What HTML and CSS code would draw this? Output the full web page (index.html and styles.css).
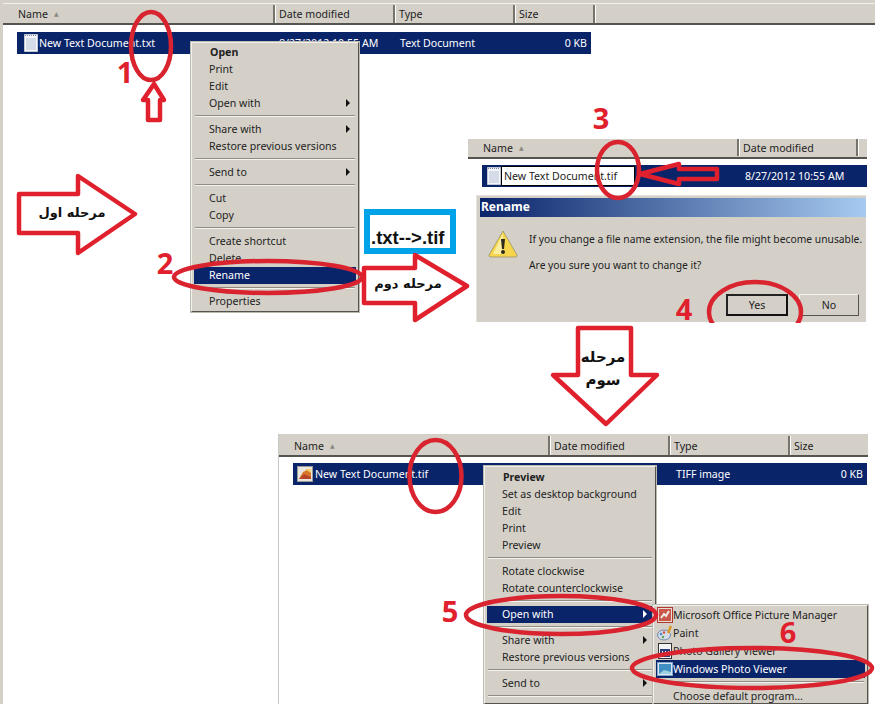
FILE: index.html
```html
<!DOCTYPE html>
<html lang="en">
<head>
    <meta charset="UTF-8">
    <meta name="viewport" content="width=device-width, initial-scale=1.0">
    <title>Rename txt to tif</title>
    <link rel="stylesheet" href="styles.css">
</head>
<body>
<div class="canvas">
    <svg class="icon-defs" width="0" height="0">
        <defs>
            <symbol id="doc" viewBox="0 0 14 18">
                <path d="M.5.5h13v17H.5z" fill="#f4f6fb" stroke="#c2c8d4"/>
                <path d="M1 1.500h12" stroke="#7d8696" stroke-dasharray="1 1"/>
                <path d="M2 5h10M2 7h10M2 9h10M2 11h10M2 13h10M2 15h10" stroke="#b6c2d6"/>
            </symbol>
        </defs>
    </svg>

    <!-- First explorer shot -->
    <section class="explorer shot-one">
        <div class="list-header">
            <div class="col col-name">Name <span class="sort">&#9650;</span></div>
            <div class="col col-date">Date modified</div>
            <div class="col col-type">Type</div>
            <div class="col col-size">Size</div>
            <div class="col col-rest"></div>
        </div>
        <div class="file-row">
            <svg class="file-icon" width="14" height="18"><use href="#doc"/></svg>
            <span class="file-name">New Text Document.txt</span>
            <span class="file-date">8/27/2012 10:55 AM</span>
            <span class="file-type">Text Document</span>
            <span class="file-size">0 KB</span>
        </div>
    </section>

    <div class="menu menu-one">
        <div class="menu-item bold">Open</div>
        <div class="menu-item">Print</div>
        <div class="menu-item">Edit</div>
        <div class="menu-item has-sub">Open with</div>
        <div class="menu-sep"></div>
        <div class="menu-item has-sub">Share with</div>
        <div class="menu-item">Restore previous versions</div>
        <div class="menu-sep"></div>
        <div class="menu-item has-sub">Send to</div>
        <div class="menu-sep"></div>
        <div class="menu-item">Cut</div>
        <div class="menu-item">Copy</div>
        <div class="menu-sep"></div>
        <div class="menu-item">Create shortcut</div>
        <div class="menu-item">Delete</div>
        <div class="menu-item active">Rename</div>
        <div class="menu-sep"></div>
        <div class="menu-item">Properties</div>
    </div>

    <!-- Rename shot -->
    <section class="explorer shot-two">
        <div class="list-header">
            <div class="col col-name">Name <span class="sort">&#9650;</span></div>
            <div class="col col-date">Date modified</div>
            <div class="col col-cut"></div>
        </div>
        <div class="file-row">
            <svg class="file-icon" width="14" height="18"><use href="#doc"/></svg>
            <span class="rename-input">New Text Document.tif</span>
            <span class="file-date">8/27/2012 10:55 AM</span>
        </div>
    </section>

    <div class="dialog">
        <div class="dialog-title">Rename</div>
        <div class="dialog-body">
            <svg class="warn" width="32" height="30" viewBox="0 0 32 30">
                <path d="M16 2 L30 26 Q30.500 28 28 28 H4 Q1.500 28 2 26 Z" fill="#f6d54a" stroke="#a8a070"/>
                <path d="M16 4 L6 25 H16 Z" fill="#fbeea0"/>
                <path d="M14 10h4l-1 10h-2z" fill="#2b2a1c"/>
                <circle cx="16" cy="23" r="2" fill="#2b2a1c"/>
            </svg>
            <div class="dialog-text">
                <p>If you change a file name extension, the file might become unusable.</p>
                <p>Are you sure you want to change it?</p>
            </div>
        </div>
        <div class="dialog-buttons">
            <div class="btn btn-default">Yes</div>
            <div class="btn">No</div>
        </div>
    </div>

    <div class="ext-note">.txt--&gt;.tif</div>

    <!-- Third explorer shot -->
    <section class="explorer shot-three">
        <div class="list-header">
            <div class="col col-name">Name <span class="sort">&#9650;</span></div>
            <div class="col col-date">Date modified</div>
            <div class="col col-type">Type</div>
            <div class="col col-size">Size</div>
        </div>
        <div class="file-row">
            <svg class="file-icon" width="16" height="16" viewBox="0 0 16 16">
                <rect x=".5" y=".5" width="15" height="15" fill="#e9e6de" stroke="#9a9a9a"/>
                <path d="M2 13 L6 6 L10 4 L14 3 V13Z" fill="#d9772b"/>
                <path d="M2 13 L7 8 L14 11 V13Z" fill="#b8452a"/>
                <path d="M8 3h6v4z" fill="#f3cf6b"/>
            </svg>
            <span class="file-name">New Text Document.tif</span>
            <span class="file-type">TIFF image</span>
            <span class="file-size">0 KB</span>
        </div>
    </section>

    <div class="menu menu-three">
        <div class="menu-item bold">Preview</div>
        <div class="menu-item">Set as desktop background</div>
        <div class="menu-item">Edit</div>
        <div class="menu-item">Print</div>
        <div class="menu-item">Preview</div>
        <div class="menu-sep"></div>
        <div class="menu-item">Rotate clockwise</div>
        <div class="menu-item">Rotate counterclockwise</div>
        <div class="menu-sep"></div>
        <div class="menu-item active has-sub">Open with</div>
        <div class="menu-sep"></div>
        <div class="menu-item has-sub">Share with</div>
        <div class="menu-item">Restore previous versions</div>
        <div class="menu-sep"></div>
        <div class="menu-item has-sub">Send to</div>
        <div class="menu-sep"></div>
    </div>

    <div class="menu submenu">
        <div class="sub-item">
            <svg width="16" height="16" viewBox="0 0 16 16">
                <rect x=".5" y=".5" width="15" height="15" fill="#e8dcd8" stroke="#b3372c"/>
                <path d="M2 2h12v12H2z" fill="#c9574a"/>
                <path d="M4 11l3-4 2 2 3-5" stroke="#f5eee8" stroke-width="2" fill="none"/>
            </svg>
            <span>Microsoft Office Picture Manager</span>
        </div>
        <div class="sub-item">
            <svg width="16" height="16" viewBox="0 0 16 16">
                <ellipse cx="7" cy="10" rx="6.500" ry="5" fill="#d5dbe8" stroke="#6f88ad"/>
                <circle cx="4" cy="9" r="1.200" fill="#3f7fc9"/>
                <circle cx="7" cy="7.500" r="1.200" fill="#d94a3a"/>
                <circle cx="6" cy="12" r="1.200" fill="#5aa84a"/>
                <path d="M11 8 L14 1" stroke="#d99a2b" stroke-width="2.500"/>
            </svg>
            <span>Paint</span>
        </div>
        <div class="sub-item">
            <svg width="16" height="16" viewBox="0 0 16 16">
                <rect x="1.500" y=".5" width="13" height="15" fill="#f4f4f4" stroke="#333"/>
                <rect x="3" y="6" width="10" height="8" fill="#2a3b7c"/>
                <path d="M5 8h1v4H5zM8 8h1v4H8zM11 8h1v4h-1z" fill="#fff"/>
            </svg>
            <span>Photo Gallery Viewer</span>
        </div>
        <div class="sub-item active">
            <svg width="16" height="16" viewBox="0 0 16 16">
                <rect x=".5" y="1.500" width="15" height="13" fill="#dbe6f2" stroke="#7fa6c9"/>
                <rect x="2" y="3" width="12" height="10" fill="#3f8fc2"/>
                <path d="M2 13 L7 9 L14 11 V13Z" fill="#9fd0e2"/>
            </svg>
            <span>Windows Photo Viewer</span>
        </div>
        <div class="menu-sep"></div>
        <div class="sub-item">
            <span class="sub-plain">Choose default program...</span>
        </div>
    </div>

    <!-- Red marks drawn over the shots -->
    <svg class="marks" width="875" height="704" viewBox="0 0 875 704">
        <defs>
            <clipPath id="dialog-clip"><rect x="476" y="195" width="390" height="128"/></clipPath>
        </defs>
        <g class="mark-line">
            <ellipse cx="151" cy="46" rx="20" ry="34"/>
            <ellipse cx="268" cy="277" rx="94" ry="16"/>
            <ellipse cx="618" cy="170" rx="21" ry="28"/>
            <ellipse cx="755" cy="312" rx="46" ry="30" clip-path="url(#dialog-clip)"/>
            <ellipse cx="435.500" cy="476" rx="26" ry="36"/>
            <ellipse cx="561" cy="615" rx="95" ry="19"/>
            <ellipse cx="752" cy="668" rx="120" ry="20"/>
        </g>
        <g class="mark-arrow">
            <path d="M154 84 L164 100 H160 V120 H148 V100 H143 Z"/>
            <path class="arrow-open" d="M640 174 L679 164 V169 H717 V179 H679 V184 Z"/>
            <path d="M19 194 H78 V176 L135 214 L78 253 V233 H19 Z"/>
            <path d="M364 268 H415 V255 L467 286 L415 320 V303 H364 Z"/>
            <path d="M578 328 H631 V375 H657 L606 424 L553 375 H578 Z"/>
        </g>
        <g class="step-num">
            <text x="125" y="83">1</text>
            <text x="165" y="274">2</text>
            <text x="601" y="129">3</text>
            <text x="684" y="320">4</text>
            <text x="450" y="622">5</text>
            <text x="788" y="643">6</text>
        </g>
        <g class="step-label">
            <text x="72" y="217">مرحله اول</text>
            <text x="408" y="288">مرحله دوم</text>
            <text class="label-large" x="603" y="362">مرحله</text>
            <text class="label-large" x="603" y="385">سوم</text>
        </g>
    </svg>
</div>
</body>
</html>
```

FILE: styles.css
```css
* {
    box-sizing: border-box;
}
html, body {
    margin: 0;
    padding: 0;
    background-color: white;
}
.canvas {
    position: relative;
    width: 875px;
    height: 704px;
    overflow: hidden;
    font-family: "Noto Sans", "DejaVu Sans", sans-serif;
    font-size: 10.600px;
    color: #222;
    border-left: 3px solid #d4d0c8;
}
.icon-defs {
    position: absolute;
}

/* Explorer shots */
.explorer {
    position: absolute;
}
.shot-one {
    left: 0;
    top: 0;
    width: 872px;
}
.shot-two {
    left: 465px;
    top: 139px;
    width: 399px;
}
.shot-three {
    left: 275px;
    top: 434px;
    width: 590px;
    height: 270px;
    border-left: 1px solid #c8c8c8;
}
.list-header {
    display: flex;
    height: 25px;
    padding-top: 2px;
    background-color: #d4d0c8;
    border-top: 3px solid #d4d0c8;
    border-bottom: 2px solid #55534e;
    box-shadow: inset 0 1px 0 #f2f0ea;
}
.shot-two .list-header {
    height: 20px;
    padding-top: 0;
    padding-bottom: 1px;
    border-top: 0;
    box-shadow: none;
}
.shot-three .list-header {
    height: 23px;
    padding-top: 1px;
    border-top: 1px solid #d4d0c8;
    box-shadow: none;
}
.col {
    display: flex;
    align-items: center;
    padding-left: 4px;
    border-right: 2px solid #77746e;
    box-shadow: 1px 0 0 #fff;
}
.col-name {
    width: 272px;
    padding-left: 15px;
}
.col-date,
.col-type {
    width: 120px;
}
.col-size {
    width: 80px;
}
.col-rest {
    flex: 1;
    border-right: 0;
    box-shadow: none;
}
.shot-two .col-name {
    width: 271px;
    padding-left: 15px;
}
.shot-two .col-date {
    width: 119px;
}
.col-cut {
    width: 9px;
}
.shot-two .col-cut {
    border-right: 0;
    box-shadow: none;
}
.shot-three .col-name {
    width: 271px;
}
.shot-three .col-size {
    flex: 1;
    border-right: 0;
    box-shadow: none;
}
.sort {
    margin-left: 6px;
    font-size: 6px;
    color: #8a8880;
}
.file-row {
    display: flex;
    align-items: center;
    height: 22px;
    margin-top: 7px;
    margin-left: 14px;
    padding-bottom: 1px;
    width: 574px;
    background-color: #0a246a;
    color: white;
}
.file-icon {
    flex: none;
    margin-left: 7px;
}
.file-name {
    width: 240px;
    margin-left: 1px;
    white-space: nowrap;
}
.file-date {
    width: 121px;
    white-space: nowrap;
}
.file-type {
    flex: 1;
}
.file-size {
    padding-right: 4px;
}
.shot-two .file-row {
    width: 385px;
    margin-top: 6px;
    margin-left: 14px;
    padding-bottom: 0;
}
.shot-two .file-icon {
    margin-left: 5px;
}
.rename-input {
    width: 134px;
    height: 20px;
    margin-right: 110px;
    padding-left: 2px;
    background-color: white;
    border: 1px solid black;
    color: #222;
    line-height: 18px;
    white-space: nowrap;
}
.shot-three .file-row {
    width: 574px;
    margin-top: 6px;
    margin-left: 14px;
}
.shot-three .file-icon {
    margin-left: 4px;
    margin-right: 1px;
}
.shot-three .file-name {
    width: 361px;
}

/* Context menus */
.menu {
    position: absolute;
    display: flex;
    flex-direction: column;
    padding: 2px;
    background-color: #d4d0c8;
    border: 1px solid;
    border-color: #f2f0ea #55534e #55534e #f2f0ea;
    outline: 1px solid #bdbab2;
}
.menu-one {
    left: 188px;
    top: 42px;
    width: 168px;
    height: 270px;
    padding-top: 1px;
}
.menu-three {
    left: 481px;
    top: 466px;
    width: 172px;
    height: 238px;
}
.submenu {
    left: 650px;
    top: 605px;
    width: 215px;
    height: 99px;
    padding-top: 0;
}
.menu-item {
    position: relative;
    flex: none;
    height: 17px;
    padding-left: 15px;
    line-height: 17px;
    white-space: nowrap;
}
.bold {
    font-weight: bold;
    padding-left: 16px;
}
.active {
    background-color: #0a246a;
    color: white;
}
.has-sub::after {
    content: "";
    position: absolute;
    right: 6px;
    top: 4px;
    border-left: 4px solid #111;
    border-top: 4px solid transparent;
    border-bottom: 4px solid transparent;
}
.active.has-sub::after {
    border-left-color: white;
}
.menu-sep {
    flex: none;
    height: 2px;
    margin: 3px 1px 4px;
    background-color: #8f8c85;
    border-bottom: 1px solid #f5f3ee;
}
.sub-item {
    display: flex;
    flex: none;
    align-items: center;
    height: 18px;
    padding-left: 1px;
    white-space: nowrap;
}
.sub-plain {
    padding-left: 16px;
}

/* Rename dialog */
.dialog {
    position: absolute;
    left: 473px;
    top: 195px;
    width: 390px;
    height: 127px;
    display: flex;
    flex-direction: column;
    padding: 2px 0 0 3px;
    background-color: #d4d0c8;
    border-top: 1px solid #e4e2dc;
    border-left: 1px solid #e4e2dc;
}
.dialog-title {
    flex: none;
    height: 19px;
    padding-left: 1px;
    background: linear-gradient(to right, #0a246a, #a6caf0);
    color: white;
    font-size: 12px;
    font-weight: bold;
    line-height: 18px;
}
.dialog-body {
    display: flex;
    flex: none;
    gap: 10px;
    height: 66px;
    padding: 12px 0 0 7px;
}
.warn {
    flex: none;
}
.dialog-text p {
    margin: 0 0 11px;
    font-size: 10.300px;
    line-height: 15px;
    white-space: nowrap;
}
.dialog-text {
    padding-top: 3px;
}
.dialog-buttons {
    display: flex;
    justify-content: flex-end;
    gap: 11px;
    padding: 11px 7px 0 0;
}
.btn {
    width: 60px;
    height: 22px;
    text-align: center;
    line-height: 20px;
    background-color: #d4d0c8;
    border: 1px solid;
    border-color: #f4f2ec #55534e #55534e #f4f2ec;
}
.btn-default {
    width: 62px;
    border: 2px solid #222;
    border-color: #222 #111 #111 #222;
    line-height: 18px;
}

.ext-note {
    position: absolute;
    left: 361px;
    top: 209px;
    width: 92px;
    height: 45px;
    padding-left: 1px;
    border: 6px solid #00a2e8;
    background-color: white;
    color: #111;
    font-family: "Liberation Sans", Arial, sans-serif;
    font-size: 18.500px;
    font-weight: bold;
    line-height: 46px;
    white-space: nowrap;
}

/* Annotation layer */
.marks {
    position: absolute;
    left: -3px;
    top: 0;
}
.mark-line ellipse {
    fill: none;
    stroke: #d9232e;
    stroke-width: 4.500;
}
.mark-arrow path {
    fill: white;
    stroke: #e0202c;
    stroke-width: 4.500;
    stroke-linejoin: round;
}
.mark-arrow .arrow-open {
    fill: none;
}
.step-num text {
    fill: #e0202c;
    font-family: "Open Sans", "DejaVu Sans", sans-serif;
    font-size: 29px;
    font-weight: bold;
    text-anchor: middle;
}
.step-label text {
    fill: #111;
    font-family: "DejaVu Sans", sans-serif;
    font-size: 13px;
    font-weight: bold;
    text-anchor: middle;
}
.step-label .label-large {
    font-size: 15px;
}
```
